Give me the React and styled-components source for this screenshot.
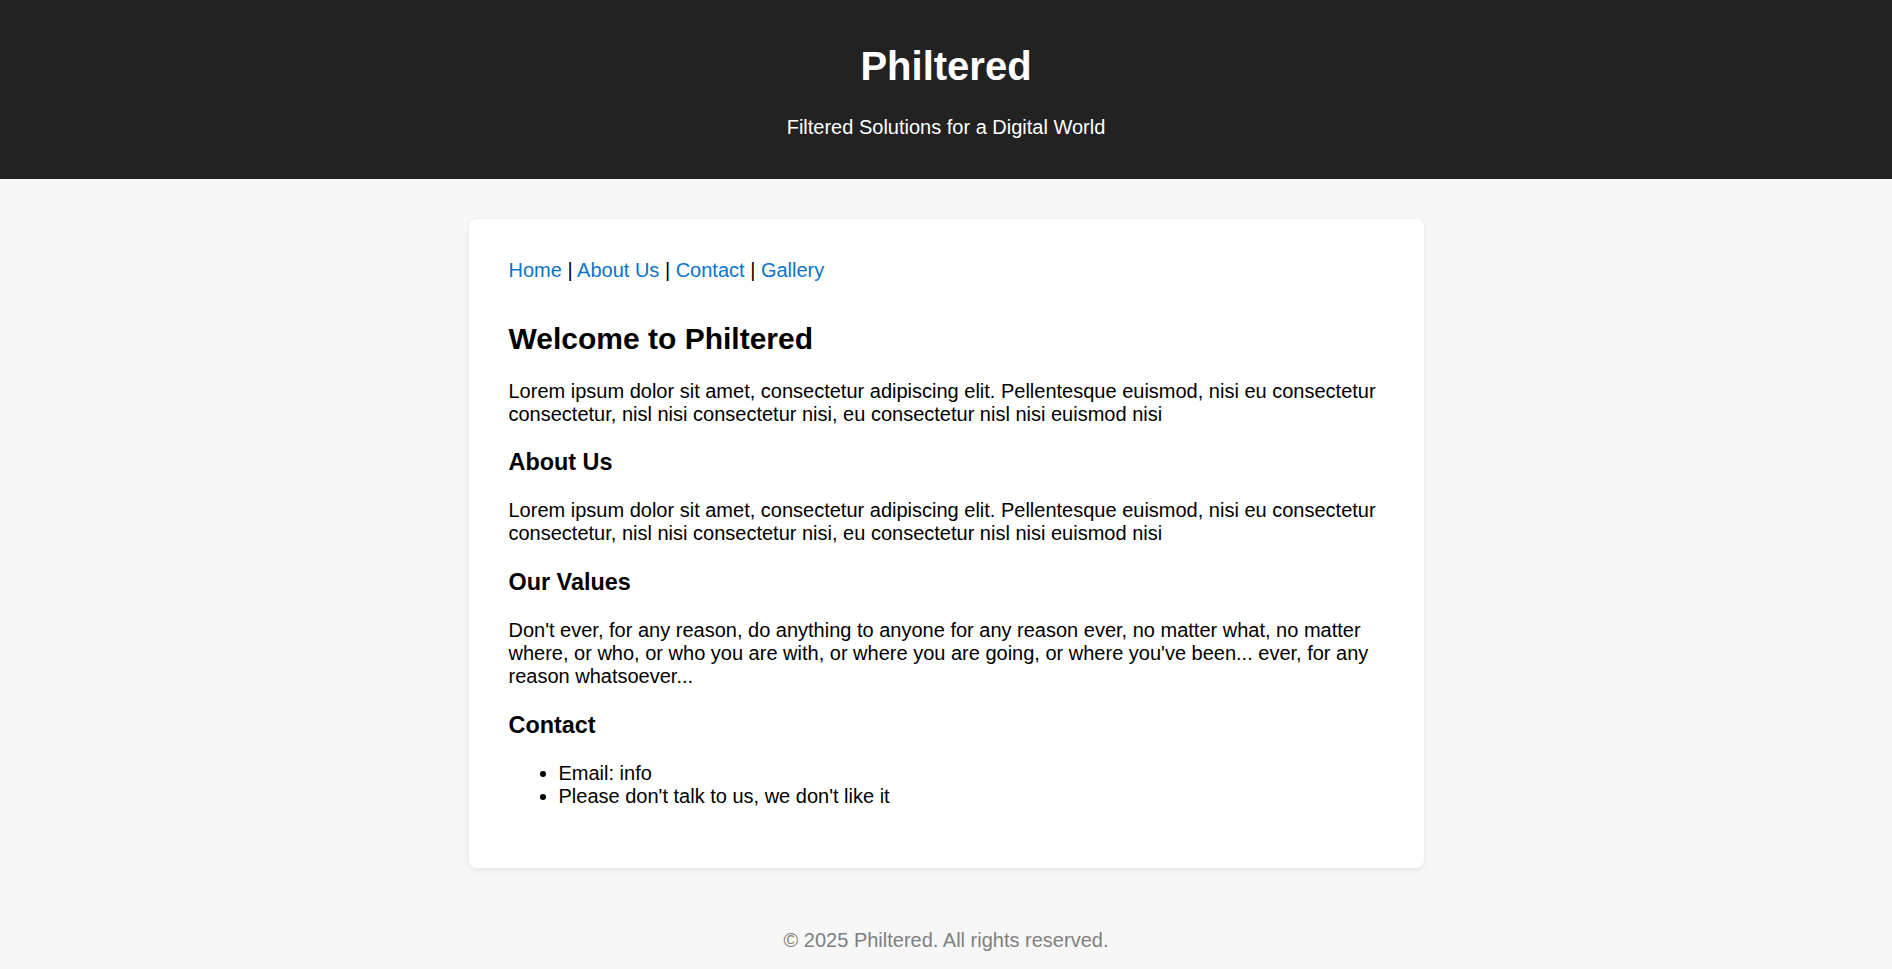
import React from 'react'
import styled, { createGlobalStyle } from 'styled-components';

const GlobalStyle = createGlobalStyle`
    body {
        margin: 0;
        background: #f7f7f7;
        font-family: "Liberation Sans", Arial, sans-serif;
        font-size: 20px;
        color: #000;
    }
`;

export default function App() {
    return (
        <div>
            <GlobalStyle />
            <Header>
                <Title>Philtered</Title>
                <Tagline>Filtered Solutions for a Digital World</Tagline>
            </Header>
            <Main>
                <Card>
                    <Nav>
                        <Link href="#">Home</Link> | <Link href="#">About Us</Link> | <Link href="#">Contact</Link> | <Link href="#">Gallery</Link>
                    </Nav>
                    <H2>Welcome to Philtered</H2>
                    <P>Lorem ipsum dolor sit amet, consectetur adipiscing elit. Pellentesque euismod, nisi eu consectetur consectetur, nisl nisi consectetur nisi, eu consectetur nisl nisi euismod nisi</P>
                    <H3>About Us</H3>
                    <P>Lorem ipsum dolor sit amet, consectetur adipiscing elit. Pellentesque euismod, nisi eu consectetur consectetur, nisl nisi consectetur nisi, eu consectetur nisl nisi euismod nisi</P>
                    <H3>Our Values</H3>
                    <P>Don't ever, for any reason, do anything to anyone for any reason ever, no matter what, no matter where, or who, or who you are with, or where you are going, or where you've been... ever, for any reason whatsoever...</P>
                    <H3>Contact</H3>
                    <List>
                        <li>Email: info</li>
                        <li>Please don't talk to us, we don't like it</li>
                    </List>
                </Card>
            </Main>
            <Footer>© 2025 Philtered. All rights reserved.</Footer>
        </div>
    )
}

const Header = styled.header`
    background: #222;
    color: #fff;
    text-align: center;
    padding: 43px 20px 40px;
`;
const Title = styled.h1`
    margin: 0 0 27px;
    font-size: 40px;
    line-height: 46px;
    font-weight: bold;
`;
const Tagline = styled.p`
    margin: 0;
    font-size: 20px;
    line-height: 23px;
`;
const Main = styled.main`
    padding: 40px 20px 41px;
`;
const Card = styled.section`
    max-width: 875px;
    margin: 0 auto;
    background: #fff;
    padding: 40px;
    border-radius: 8px;
    box-shadow: 0 2px 6px rgba(0, 0, 0, 0.08);
`;
const Nav = styled.nav`
    line-height: 23px;
    margin-bottom: 40px;
`;
const Link = styled.a`
    color: #0a74cc;
    text-decoration: none;
`;
const H2 = styled.h2`
    font-size: 30px;
    line-height: 34.5px;
    margin: 0 0 23px;
`;
const H3 = styled.h3`
    font-size: 23.4px;
    line-height: 27px;
    margin: 23.6px 0 23.4px;
`;
const P = styled.p`
    margin: 0;
    line-height: 23px;
`;
const List = styled.ul`
    margin: 0 0 20px;
    padding-left: 50px;
    line-height: 23px;
`;
const Footer = styled.footer`
    text-align: center;
    color: #808080;
    padding: 20px;
    line-height: 23px;
`;
